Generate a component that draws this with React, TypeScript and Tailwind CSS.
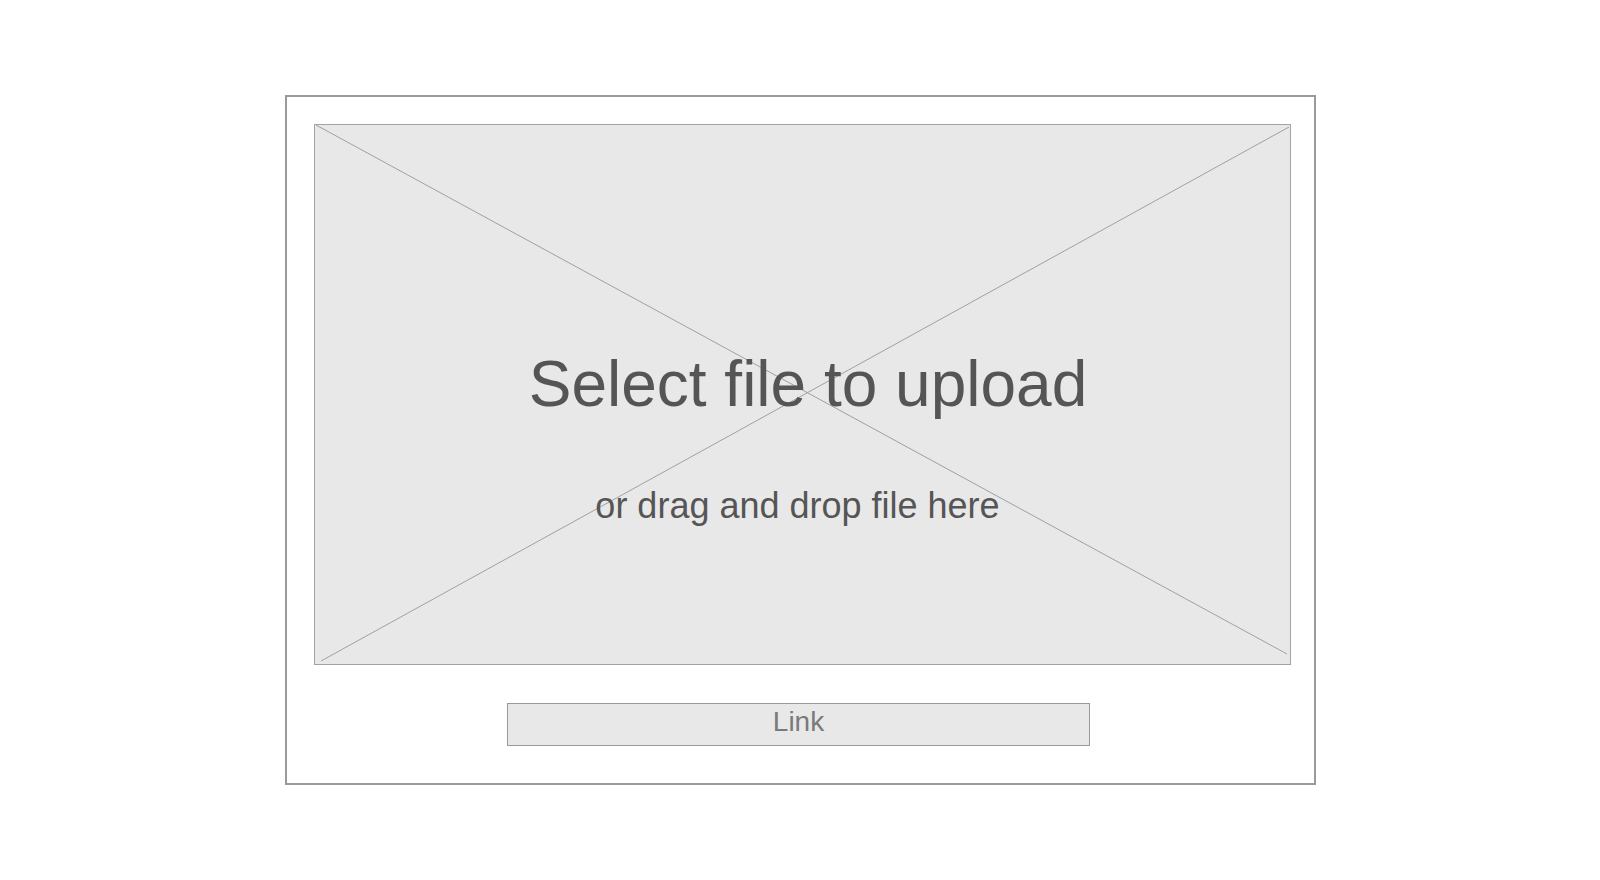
import React from "react";

export default function App() {
  return (
    <div
      className="w-[1600px] h-[880px] bg-white overflow-hidden"
      style={{ fontFamily: '"Liberation Sans", Arial, sans-serif' }}
    >
      <div className="ml-[285px] mt-[95px] w-[1031px] h-[690px] border-2 border-[#9a9a9a] flex flex-col">
        <div className="relative ml-[27px] mt-[27px] w-[977px] h-[541px] border border-[#a3a3a3] bg-[#e8e8e8] flex flex-col items-center">
          <svg
            className="absolute inset-0 w-full h-full pointer-events-none"
            viewBox="0 0 975 539"
            preserveAspectRatio="none"
          >
            <line x1="1" y1="0" x2="972" y2="529" stroke="#a0a0a0" strokeWidth="1" />
            <line x1="974" y1="2" x2="6" y2="536" stroke="#a0a0a0" strokeWidth="1" />
          </svg>
          <div className="relative mt-[227px] ml-[11px] text-[64px] leading-none text-[#555555] whitespace-nowrap">
            Select file to upload
          </div>
          <div className="relative mt-[72px] mr-[10px] text-[36px] leading-none text-[#555555] whitespace-nowrap">
            or drag and drop file here
          </div>
        </div>
        <div className="mt-[38px] ml-[220px] w-[583px] h-[43px] border border-[#999999] bg-[#e8e8e8] flex justify-center">
          <div className="pt-[4px] text-[28px] leading-none text-[#7a7a7a]">Link</div>
        </div>
      </div>
    </div>
  );
}
